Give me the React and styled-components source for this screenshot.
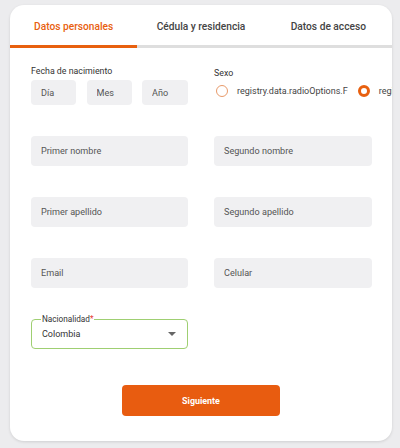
import React, { useState } from 'react';
import styled, { createGlobalStyle } from 'styled-components';

const GlobalStyle = createGlobalStyle`
  body {
    margin: 0;
    background: #ececee;
    font-family: Roboto, 'Liberation Sans', sans-serif;
  }
`;

const Page = styled.div`
  padding: 5px 8px 7px 10px;
`;

const Card = styled.div`
  width: 382px;
  height: 436px;
  background: #fff;
  border-radius: 14px;
  box-shadow: 0 1px 3px rgba(0, 0, 0, 0.12);
  overflow: hidden;
  display: flex;
  flex-direction: column;
`;

const Tabs = styled.div`
  display: grid;
  grid-template-columns: repeat(3, 1fr);
  border-bottom: 3px solid #dedede;
  height: 40px;
`;

const Tab = styled.button`
  border: none;
  background: none;
  font-family: inherit;
  font-size: 10.2px;
  font-weight: 500;
  color: ${p => (p.active ? '#e8600f' : '#444')};
  position: relative;
  padding: 0;
  padding-top: 2px;
  cursor: pointer;
  &::after {
    content: '';
    position: absolute;
    left: 0;
    right: 0;
    bottom: -3px;
    height: 3px;
    background: ${p => (p.active ? '#e8600f' : 'transparent')};
  }
`;

const Form = styled.div`
  padding: 17px 20px 0 21px;
  display: grid;
  grid-template-columns: 157px 158px;
  column-gap: 26px;
  row-gap: 31px;
`;

const Field = styled.div`
  display: flex;
  flex-direction: column;
  min-width: 0;
`;

const Label = styled.div`
  font-size: 8.8px;
  color: #333;
  height: 15px;
  line-height: 12px;
  margin-top: ${p => p.offset || 0}px;
`;

const DateRow = styled.div`
  display: flex;
  gap: 10.5px;
`;

const Input = styled.input`
  box-sizing: border-box;
  width: ${p => p.w || '100%'};
  height: ${p => p.h || 30}px;
  border: none;
  border-radius: 4px;
  background: #f0f0f2;
  padding: 0 10px;
  font-family: inherit;
  font-size: 9.1px;
  color: #333;
  outline: none;
  &::placeholder {
    color: #555;
  }
`;

const RadioRow = styled.div`
  display: flex;
  align-items: center;
  gap: 8px;
  white-space: nowrap;
  margin-top: 3px;
`;

const RadioItem = styled.label`
  display: flex;
  align-items: center;
  gap: 9px;
  font-size: 9px;
  color: #444;
`;

const RadioDot = styled.span`
  box-sizing: border-box;
  width: 12px;
  height: 12px;
  border-radius: 50%;
  border: ${p => (p.checked ? '3px solid #e8600f' : '1px solid #e89a6a')};
  margin-left: 2px;
  flex-shrink: 0;
`;

const Select = styled.div`
  position: relative;
  box-sizing: border-box;
  height: 30px;
  border: 1px solid #9fcf72;
  border-radius: 4px;
  display: flex;
  align-items: center;
  justify-content: space-between;
  padding: 0 11px 0 10px;
  font-size: 9px;
  color: #333;
`;

const Legend = styled.span`
  position: absolute;
  top: -6px;
  left: 9px;
  padding: 0 1px;
  background: #fff;
  font-size: 8.2px;
  line-height: 10px;
  color: #333;
  & b {
    color: #e53935;
    font-weight: 400;
  }
`;

const Caret = styled.span`
  width: 0;
  height: 0;
  border-left: 4.5px solid transparent;
  border-right: 4.5px solid transparent;
  border-top: 4.5px solid #666;
`;

const Footer = styled.div`
  display: flex;
  justify-content: center;
  padding-top: 36px;
`;

const Button = styled.button`
  width: 158px;
  height: 31px;
  border: none;
  border-radius: 4px;
  background: #e85c10;
  color: #fff;
  font-family: inherit;
  font-weight: 700;
  font-size: 8.9px;
`;

export default function App() {
  const [tab, setTab] = useState(0);
  const [sex, setSex] = useState('M');
  const tabs = ['Datos personales', 'Cédula y residencia', 'Datos de acceso'];

  return (
    <Page>
      <GlobalStyle />
      <Card>
        <Tabs>
          {tabs.map((t, i) => (
            <Tab key={t} active={tab === i} onClick={() => setTab(i)}>
              {t}
            </Tab>
          ))}
        </Tabs>
        <Form>
          <Field>
            <Label>Fecha de nacimiento</Label>
            <DateRow>
              <Input w="45px" h={25} placeholder="Día" />
              <Input w="45px" h={25} placeholder="Mes" />
              <Input w="46px" h={25} placeholder="Año" />
            </DateRow>
          </Field>
          <Field>
            <Label offset={2}>Sexo</Label>
            <RadioRow>
              <RadioItem onClick={() => setSex('F')}>
                <RadioDot checked={sex === 'F'} />
                registry.data.radioOptions.F
              </RadioItem>
              <RadioItem onClick={() => setSex('M')}>
                <RadioDot checked={sex === 'M'} />
                registry.data.radioOptions.M
              </RadioItem>
            </RadioRow>
          </Field>
          <Input placeholder="Primer nombre" />
          <Input placeholder="Segundo nombre" />
          <Input placeholder="Primer apellido" />
          <Input placeholder="Segundo apellido" />
          <Input placeholder="Email" />
          <Input placeholder="Celular" />
          <Select>
            <Legend>
              Nacionalidad<b>*</b>
            </Legend>
            Colombia
            <Caret />
          </Select>
        </Form>
        <Footer>
          <Button>Siguiente</Button>
        </Footer>
      </Card>
    </Page>
  );
}
